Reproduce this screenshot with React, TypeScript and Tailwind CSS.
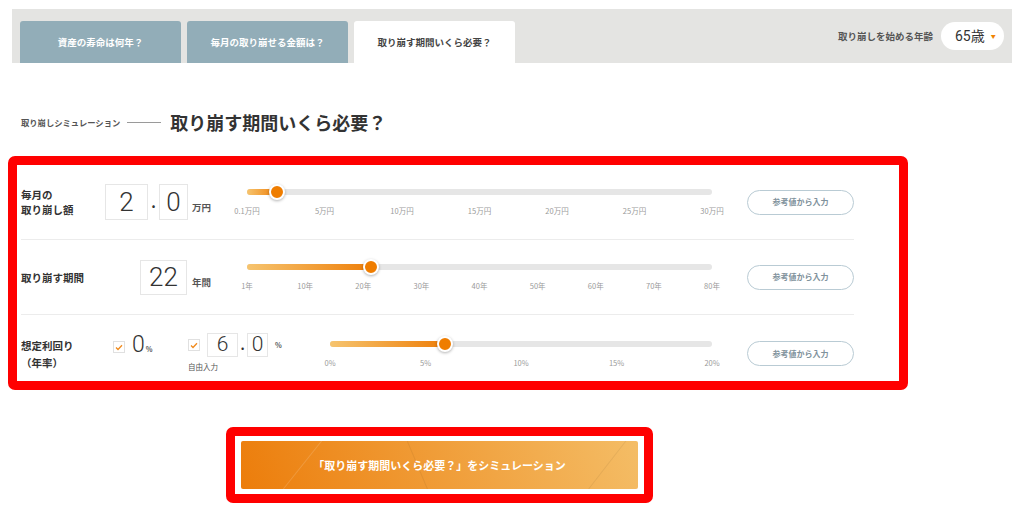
import React from 'react';

const tabs = [
  { label: '資産の寿命は何年？', active: false },
  { label: '毎月の取り崩せる金額は？', active: false },
  { label: '取り崩す期間いくら必要？', active: true },
];

interface SliderProps {
  widthClass: string;
  pos: number;
  labels: string[];
}

function Slider({ widthClass, pos, labels }: SliderProps) {
  return (
    <div className={`${widthClass} flex flex-col`}>
      <div className="relative h-[6px] rounded-full bg-[#e6e6e6]">
        <div
          className="absolute left-0 top-0 h-[6px] rounded-full bg-[linear-gradient(90deg,#f6c46f,#ee7f0a)]"
          style={{ width: `${pos}%` }}
        />
        <div
          className="absolute top-1/2 h-[16px] w-[16px] -translate-x-1/2 -translate-y-1/2 rounded-full border-2 border-white bg-[#ef7d00] shadow-[0_1px_3px_rgba(0,0,0,0.3)]"
          style={{ left: `${pos}%` }}
        />
      </div>
      <div className="mt-[11px] flex h-[10px] justify-between">
        {labels.map(l => (
          <div key={l} className="flex w-0 justify-center">
            <span className="whitespace-nowrap text-[7.5px] leading-[10px] text-[#9a9a9a]">{l}</span>
          </div>
        ))}
      </div>
    </div>
  );
}

function RefButton({ className = '' }: { className?: string }) {
  return (
    <button className={`ml-[35px] flex h-[25px] w-[107px] items-center justify-center rounded-full border border-[#b9cbd4] bg-white text-[8px] font-bold text-[#7f929c] ${className}`}>
      参考値から入力
    </button>
  );
}

function Check() {
  return (
    <div className="flex h-[12px] w-[12px] items-center justify-center border border-[#e0e0e0] bg-white">
      <svg width="8" height="7" viewBox="0 0 8 7">
        <polyline points="1,3.5 3,5.5 7,1.2" fill="none" stroke="#f08a1c" strokeWidth="1.3" />
      </svg>
    </div>
  );
}

export default function App() {
  return (
    <div className="h-[514px] w-[1024px] overflow-hidden bg-white font-['Noto_Sans_CJK_JP',sans-serif] text-[#333]">
      {/* tab bar */}
      <div className="mx-3 mt-[9px] flex h-[54px] justify-between bg-[#e4e4e2] pl-2 pr-[8px]">
        <div className="flex items-end gap-[6px]">
          {tabs.map(t => (
            <div
              key={t.label}
              className={
                t.active
                  ? 'flex h-[42px] w-[161px] items-center justify-center rounded-t-[3px] bg-white text-[9.5px] font-bold text-[#444]'
                  : 'flex h-[42px] w-[161px] items-center justify-center rounded-t-[3px] bg-[#92adb8] text-[9.5px] font-bold text-white'
              }
            >
              {t.label}
            </div>
          ))}
        </div>
        <div className="flex items-center gap-[8px]">
          <span className="text-[9.5px] font-bold text-[#555]">取り崩しを始める年齢</span>
          <div className="flex h-[28px] w-[63px] items-center rounded-full bg-white pl-[14px]">
            <span className="font-['Roboto','Noto_Sans_CJK_JP',sans-serif] text-[14px] leading-none text-[#333]">65歳</span>
            <span className="ml-[6px] text-[5px] text-[#f08300]">▼</span>
          </div>
        </div>
      </div>

      {/* heading */}
      <div className="mt-[47px] flex h-[24px] items-center pl-[21px]">
        <span className="text-[8.3px] font-bold text-[#555]">取り崩しシミュレーション</span>
        <div className="ml-[7px] mr-[9px] h-px w-[34px] bg-[#9a9a9a]" />
        <h2 className="text-[18px] font-bold text-[#333]">取り崩す期間いくら必要？</h2>
      </div>

      {/* form card */}
      <div className="ml-2 mt-[22px] w-[900px] rounded-[7px] border-[9px] border-[#ff0000] pl-1">
        {/* row 1 */}
        <div className="flex h-[75px] w-[833px] items-center border-b border-[#ececec]">
          <div className="flex w-[226px] items-center">
            <div className="w-[84px] text-[10.5px] font-bold leading-[15px]">
              毎月の<br />取り崩し額
            </div>
            <div className="flex h-[36px] w-[43px] items-center justify-center border border-[#e6e6e6] font-['Roboto',sans-serif] text-[26px] font-light">2</div>
            <div className="flex w-[11px] justify-center text-[14px] font-bold">.</div>
            <div className="flex h-[36px] w-[29px] items-center justify-center border border-[#e6e6e6] font-['Roboto',sans-serif] text-[26px] font-light">0</div>
            <span className="ml-[4px] mt-[10px] text-[9.5px] font-bold text-[#555]">万円</span>
          </div>
          <Slider widthClass="w-[465px]" pos={6.35} labels={['0.1万円', '5万円', '10万円', '15万円', '20万円', '25万円', '30万円']} />
          <RefButton />
        </div>

        {/* row 2 */}
        <div className="flex h-[75px] w-[833px] items-center border-b border-[#ececec]">
          <div className="flex w-[226px] items-center">
            <div className="w-[119px] text-[10.5px] font-bold leading-[15px]">取り崩す期間</div>
            <div className="flex h-[35px] w-[47px] items-center justify-center border border-[#e6e6e6] font-['Roboto',sans-serif] text-[26px] font-light">22</div>
            <span className="ml-[5px] mt-[10px] text-[9.5px] font-bold text-[#555]">年間</span>
          </div>
          <Slider widthClass="w-[465px]" pos={26.6} labels={['1年', '10年', '20年', '30年', '40年', '50年', '60年', '70年', '80年']} />
          <RefButton />
        </div>

        {/* row 3 */}
        <div className="flex h-[66px] w-[833px] items-start">
          <div className="flex w-[309px] items-start">
            <div className="mt-[22px] w-[92px] text-[10.5px] font-bold leading-[17px]">
              想定利回り<br />（年率）
            </div>
            <div className="flex w-[75px] items-start">
              <div className="mt-[26px]"><Check /></div>
              <div className="ml-[7px] mt-[19px] flex items-baseline">
                <span className="font-['Roboto',sans-serif] text-[23px] font-light leading-[22px]">0</span>
                <span className="ml-[1px] text-[7px] font-bold text-[#555]">%</span>
              </div>
            </div>
            <div className="mt-[18px] flex flex-col">
              <div className="flex items-center">
                <Check />
                <div className="ml-[7px] flex h-[24px] w-[31px] items-center justify-center border border-[#e6e6e6] font-['Roboto',sans-serif] text-[21px] font-light">6</div>
                <div className="flex w-[9px] justify-center text-[13px] font-bold">.</div>
                <div className="flex h-[24px] w-[21px] items-center justify-center border border-[#e6e6e6] font-['Roboto',sans-serif] text-[21px] font-light">0</div>
                <span className="ml-[7px] text-[7px] font-bold text-[#555]">%</span>
              </div>
              <span className="mt-[5px] text-[7.5px] leading-[10px] text-[#555]">自由入力</span>
            </div>
          </div>
          <div className="mt-[26px]">
            <Slider widthClass="w-[382px]" pos={30} labels={['0%', '5%', '10%', '15%', '20%']} />
          </div>
          <RefButton className="mt-[26px]" />
        </div>
      </div>

      {/* simulate button */}
      <div className="ml-[226px] mt-[37px] w-[427px] rounded-[7px] border-[9px] border-[#ff0000] px-[6px] py-[5px]">
        <button className="relative flex h-[48px] w-full items-center justify-center overflow-hidden rounded-[2px] bg-[linear-gradient(70deg,#ec7d0b,#f4bd66)] text-[11px] font-bold text-white">
          <svg className="absolute inset-0" width="100%" height="100%" viewBox="0 0 394 48" preserveAspectRatio="none">
            <line x1="42" y1="48" x2="80" y2="0" stroke="#ffffff" strokeOpacity="0.15" strokeWidth="1" />
            <line x1="165" y1="0" x2="185" y2="48" stroke="#000000" strokeOpacity="0.06" strokeWidth="1" />
            <line x1="345" y1="48" x2="382" y2="0" stroke="#000000" strokeOpacity="0.06" strokeWidth="1" />
          </svg>
          <span className="relative">「取り崩す期間いくら必要？」をシミュレーション</span>
        </button>
      </div>
    </div>
  );
}
